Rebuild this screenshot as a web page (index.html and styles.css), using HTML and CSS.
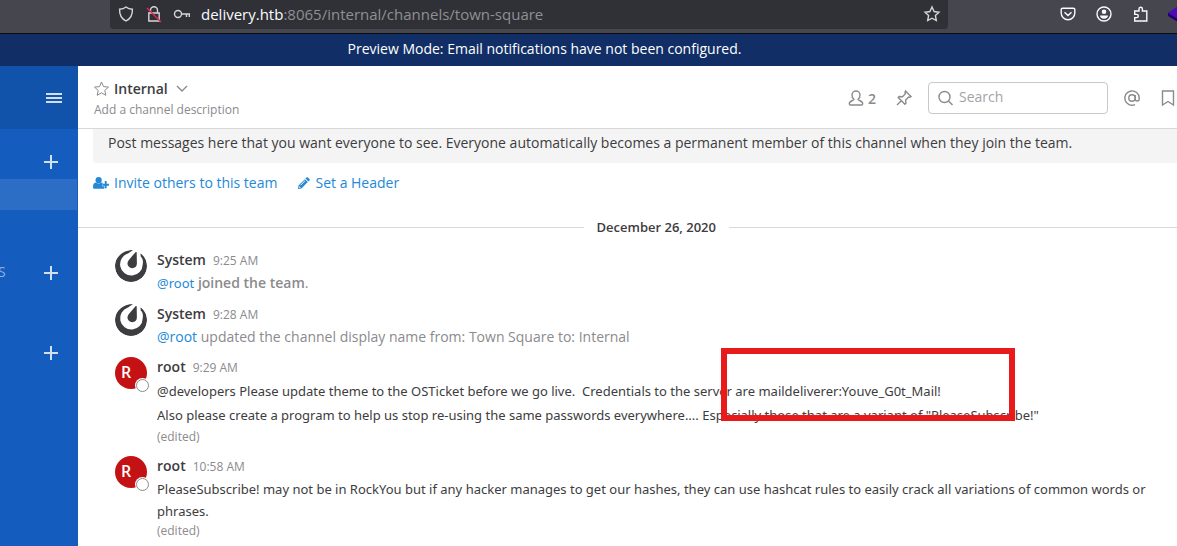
FILE: index.html
```
<!DOCTYPE html>
<html lang="en">

<head>
    <meta charset="UTF-8">
    <meta name="viewport" content="width=device-width, initial-scale=1.0">
    <title>Internal - Mattermost</title>
    <link rel="stylesheet" href="styles.css">
</head>

<body>
    <!-- Browser toolbar -->
    <div class="toolbar">
        <div class="url-bar">
            <svg class="icon" viewBox="0 0 16 16"><path d="M8 1 C6 2.6 4 3.1 1.6 3.2 C1.3 8.8 3.4 12.6 8 15 C12.600 12.600 14.700 8.800 14.400 3.200 C12 3.100 10 2.600 8 1Z"/></svg>
            <svg class="icon lock" viewBox="0 0 16 16"><path d="M4.500 7V4.200a3.500 3.500 0 0 1 7 0V7M2.800 7h10.400v8H2.800z"/><path class="slash" d="M1 2l14 14"/></svg>
            <svg class="icon key" viewBox="0 0 18 16"><circle cx="5" cy="8" r="3.500"/><path d="M8.500 8H17M13.500 8v3M16.300 8v3"/></svg>
            <span class="url"><span class="host">delivery.htb</span>:8065/internal/channels/town-square</span>
            <button class="icon-button bookmark-star" aria-label="Bookmark this page">
                <svg class="icon" viewBox="0 0 16 16"><path d="M8 1l2.100 4.500 4.900.7-3.600 3.400.9 4.900L8 12.200l-4.300 2.300.9-4.900L1 6.200l4.900-.7z"/></svg>
            </button>
        </div>
        <div class="toolbar-buttons">
            <button class="icon-button" aria-label="Save to Pocket">
                <svg class="icon" viewBox="0 0 16 16"><path d="M2.600 2.200h10.800a1.400 1.400 0 0 1 1.400 1.400V7a6.800 6.800 0 0 1-13.600 0V3.600a1.400 1.400 0 0 1 1.400-1.400zM4.500 6.200L8 9.500l3.500-3.300"/></svg>
            </button>
            <button class="icon-button" aria-label="Account">
                <svg class="icon" viewBox="0 0 16 16"><circle cx="8" cy="8" r="7"/><circle class="solid" cx="8" cy="5.800" r="2.300"/><path class="solid" d="M4 9.500h8c0 2-1.500 3.200-4 3.200s-4-1.200-4-3.200z"/></svg>
            </button>
            <button class="icon-button" aria-label="Extensions">
                <svg class="icon" viewBox="0 0 16 16"><path d="M2.700 5H7V3a1.700 1.700 0 0 1 3.400 0v2h4.400v10H2.700v-3.400h2a1.600 1.600 0 0 0 0-3.200h-2z"/></svg>
            </button>
            <svg class="extension" viewBox="0 0 20 18"><path fill="#20006e" d="M0 8l10-5 10 5v3l-10 6-10-6z"/><path fill="#4b0cb8" d="M0 8l10-7 10 7-10 6z"/></svg>
        </div>
    </div>

    <!-- Announcement -->
    <div class="banner">Preview Mode: Email notifications have not been configured.</div>

    <div class="app">
        <!-- Sidebar -->
        <nav class="sidebar">
            <div class="sidebar-header">
                <button class="icon-button" aria-label="Main menu">
                    <svg class="menu-icon" viewBox="0 0 16 10"><path d="M0 1h16M0 5h16M0 9h16"/></svg>
                </button>
            </div>
            <div class="group">
                <button class="add" aria-label="Add channel"><svg viewBox="0 0 14 14"><path d="M7 0v14M0 7h14"/></svg></button>
            </div>
            <a class="channel-active" href="#" aria-label="Internal"></a>
            <div class="group direct">
                <span class="group-label">S</span>
                <button class="add" aria-label="Add private channel"><svg viewBox="0 0 14 14"><path d="M7 0v14M0 7h14"/></svg></button>
            </div>
            <div class="group">
                <button class="add" aria-label="New direct message"><svg viewBox="0 0 14 14"><path d="M7 0v14M0 7h14"/></svg></button>
            </div>
        </nav>

        <main class="main">
            <!-- Channel header -->
            <header class="channel-header">
                <div class="channel-info">
                    <div class="channel-name">
                        <button class="icon-button" aria-label="Favorite">
                            <svg class="icon" viewBox="0 0 16 16"><path d="M7.500 1l2 4.600 5 .5-3.700 3.300 1 4.900-4.300-2.500-4.300 2.500 1-4.900L.5 6.100l5-.5z"/></svg>
                        </button>
                        <strong>Internal</strong>
                        <button class="icon-button" aria-label="Channel menu">
                            <svg class="chevron" viewBox="0 0 12 8"><path d="M1 1l5 5 5-5"/></svg>
                        </button>
                    </div>
                    <div class="description">Add a channel description</div>
                </div>
                <div class="header-tools">
                    <button class="icon-button members">
                        <svg class="icon" viewBox="0 0 16 16"><path d="M8 1a4 4 0 0 0-4 4c0 2 .7 3.600 2 4.500-.2 1.200-4.700 1-4.700 4.200 0 .8.4 1.300 1.200 1.300h11c.8 0 1.200-.5 1.200-1.300 0-3.200-4.500-3-4.700-4.200C11.300 8.600 12 7 12 5a4 4 0 0 0-4-4z"/></svg>
                        2
                    </button>
                    <button class="icon-button pin" aria-label="Pinned posts">
                        <svg class="icon" viewBox="0 0 16 16"><path d="M9.500 1l5.500 5.500-1.300.7-1-.2-3 3 .2 3.300-1 1L2.200 7.500l1-1 3.300.2 3-3-.5-1.300zM5.500 10.500L1 15"/></svg>
                    </button>
                    <label class="search">
                        <svg class="icon" viewBox="0 0 16 16"><circle cx="6.500" cy="7" r="5.500"/><path d="M10.500 11l4 4"/></svg>
                        <input type="text" placeholder="Search" aria-label="Search">
                    </label>
                    <button class="icon-button mentions" aria-label="Recent mentions">
                        <svg class="icon" viewBox="0 0 16 16"><circle cx="8" cy="8" r="3.200"/><path d="M11.200 5v4a2 2 0 0 0 4 0V8A7.200 7.200 0 1 0 11 14.600"/></svg>
                    </button>
                    <button class="icon-button saved" aria-label="Saved posts">
                        <svg class="icon" viewBox="0 0 16 16"><path d="M2.500 1h11v14L8 11.500 2.500 15z"/></svg>
                    </button>
                </div>
            </header>

            <!-- Channel intro -->
            <section class="intro">
                <p class="intro-text">Post messages here that you want everyone to see. Everyone automatically becomes a permanent member of this channel when they join the team.</p>
                <div class="intro-links">
                    <a href="#"><svg class="invite-icon" viewBox="0 0 17 14"><circle cx="6" cy="4" r="3.300"/><path d="M3 6.500c1.500 1.400 4.500 1.400 6 0 .8 0 1.400.4 1.800 1H9.700v3H12V13H1.500C.5 13 0 12.400 0 11.400 0 8.500 1 6.600 3 6.500zM12.500 5h2v2.800H17v2h-2.500v2.700h-2V9.800H10v-2h2.500z"/></svg>Invite others to this team</a>
                    <a href="#"><svg class="edit-icon" viewBox="0 0 12 12"><path fill-rule="evenodd" d="M8.600.5c.4-.4 1-.4 1.400 0L11.500 2c.4.400.4 1 0 1.400l-1.100 1.100-2.900-2.900zM6.900 2.200l2.900 2.900L3.400 11.500 0 12l.5-3.400zM1.400 9.200l-.3 1.700 1.700-.3zM6.800 3.600L2.300 8.100l.4.4L7.200 4z"/></svg>Set a Header</a>
                </div>
            </section>

            <div class="date-line"><span>December 26, 2020</span></div>

            <!-- Posts -->
            <section class="posts">
                <article class="post">
                    <svg class="avatar" viewBox="0 0 32 32"><path class="mark" d="M18 0C8 0 0 7 0 16s7 16 16 16 16-7 16-16c0-6-2.500-10-6.500-12.800l.2 3.300C28 8.500 28.200 11 27.700 14.500A11.300 11.300 0 1 1 13 3.500z"/><path class="mark" d="M21.300 2c.4 0 .4.400.4.800l.2 10.700c0 2.800-2 4.700-4.600 4.700s-4.800-2-4.800-4.600c0-1.500.7-2.700 1.800-4.200l6-7c.3-.3.700-.4 1-.4z"/></svg>
                    <div class="post-body">
                        <div class="post-head"><strong>System</strong><time>9:25 AM</time></div>
                        <p class="system joined"><a href="#">@root</a> <b>joined the team</b>.</p>
                    </div>
                </article>
                <article class="post">
                    <svg class="avatar" viewBox="0 0 32 32"><path class="mark" d="M18 0C8 0 0 7 0 16s7 16 16 16 16-7 16-16c0-6-2.500-10-6.500-12.800l.2 3.300C28 8.500 28.200 11 27.700 14.500A11.300 11.300 0 1 1 13 3.500z"/><path class="mark" d="M21.300 2c.4 0 .4.400.4.800l.2 10.700c0 2.800-2 4.700-4.600 4.700s-4.800-2-4.800-4.600c0-1.500.7-2.700 1.800-4.200l6-7c.3-.3.700-.4 1-.4z"/></svg>
                    <div class="post-body">
                        <div class="post-head"><strong>System</strong><time>9:28 AM</time></div>
                        <p class="system"><a href="#">@root</a> updated the channel display name from: Town Square to: Internal</p>
                    </div>
                </article>
                <article class="post">
                    <div class="avatar user">R<span class="status"></span></div>
                    <div class="post-body">
                        <div class="post-head"><strong>root</strong><time>9:29 AM</time></div>
                        <p class="message spaced">@developers Please update theme to the OSTicket before we go live.&nbsp; Credentials to the server are maildeliverer:Youve_G0t_Mail!<br>Also please create a program to help us stop re-using the same passwords everywhere.... Especially those that are a variant of "PleaseSubscribe!"</p>
                        <div class="edited">(edited)</div>
                    </div>
                    <div class="highlight"></div>
                </article>
                <article class="post">
                    <div class="avatar user">R<span class="status"></span></div>
                    <div class="post-body">
                        <div class="post-head"><strong>root</strong><time>10:58 AM</time></div>
                        <p class="message">PleaseSubscribe! may not be in RockYou but if any hacker manages to get our hashes, they can use hashcat rules to easily crack all variations of common words or phrases.</p>
                        <div class="edited">(edited)</div>
                    </div>
                </article>
            </section>
        </main>
    </div>
</body>

</html>
```
FILE: styles.css
```
* {
    box-sizing: border-box;
}

body {
    font-family: 'Open Sans', sans-serif;
    font-size: 14px;
    margin: 0;
    min-height: 100vh;
    display: flex;
    flex-direction: column;
    overflow: hidden;
    background-color: #fff;
    color: #3d3c40;
}

p {
    margin: 0;
}

a {
    color: #2389d7;
    text-decoration: none;
}

.icon-button {
    display: flex;
    align-items: center;
    padding: 0;
    border: none;
    background: none;
    color: inherit;
    font: inherit;
    cursor: pointer;
}

.icon {
    width: 16px;
    height: 16px;
    flex: none;
    fill: none;
    stroke: currentColor;
    stroke-width: 1.4;
    overflow: visible;
}

.icon .solid {
    fill: currentColor;
    stroke: none;
}

/* Browser toolbar */
.toolbar {
    display: flex;
    height: 34px;
    padding-left: 110px;
    background-color: #45464e;
    border-bottom: 1px solid #0c0c0d;
    color: #fbfbfe;
}

.url-bar {
    flex: 1;
    display: flex;
    align-items: center;
    height: 29px;
    padding: 0 8px 2px;
    border-radius: 0 0 4px 4px;
    background-color: #303136;
    color: #d5d5d9;
}

.lock {
    margin-left: 12px;
}

.lock .slash {
    stroke: #e22850;
}

.key {
    width: 18px;
    margin-left: 11px;
}

.url {
    margin-left: 10px;
    font-size: 15px;
    color: #8f8f94;
}

.url .host {
    color: #fbfbfe;
}

.bookmark-star {
    margin-left: auto;
}

.toolbar-buttons {
    flex: none;
    display: flex;
    align-items: center;
    gap: 20px;
    width: 229px;
    height: 27px;
    padding-left: 112px;
    overflow: hidden;
}

.extension {
    flex: none;
    width: 20px;
    height: 18px;
}

/* Announcement */
.banner {
    height: 32px;
    padding-right: 88px;
    background-color: #112f66;
    color: #fff;
    line-height: 30px;
    text-align: center;
}

.app {
    flex: 1;
    display: flex;
}

/* Sidebar */
.sidebar {
    flex: none;
    width: 78px;
    background-color: #145dbf;
    color: #d0dff2;
}

.sidebar-header {
    display: flex;
    align-items: center;
    justify-content: flex-end;
    height: 63px;
    padding-right: 16px;
    background-color: #1153ab;
}

.menu-icon {
    width: 16px;
    height: 10px;
    stroke: currentColor;
    stroke-width: 2;
}

.group {
    display: flex;
    align-items: center;
    height: 50px;
    padding: 16px 20px 0 0;
}

.group.direct {
    height: 80px;
    margin: 23px 0 7px;
    padding-top: 0;
}

.group-label {
    margin-left: -2px;
    font-size: 14px;
    line-height: 20px;
    padding-bottom: 3px;
    color: #8eb0df;
}

.add {
    display: flex;
    margin-left: auto;
    padding: 0;
    border: none;
    background: none;
    color: inherit;
    cursor: pointer;
}

.add svg {
    width: 14px;
    height: 14px;
    stroke: currentColor;
    stroke-width: 2;
}

.channel-active {
    display: block;
    height: 31px;
    margin-right: 1px;
    background-color: #2c6dc5;
}

/* Channel header */
.main {
    flex: 1;
    min-width: 0;
}

.channel-header {
    display: flex;
    justify-content: space-between;
    height: 63px;
    padding-left: 16px;
    border-bottom: 1px solid #d8d8d9;
    color: #8b8a8d;
}

.channel-info {
    padding-top: 12px;
}

.channel-name {
    display: flex;
    align-items: center;
    gap: 4px;
    height: 21px;
}

.channel-name .icon {
    stroke-width: 1;
}

.channel-name strong {
    font-weight: 600;
    color: #3d3c40;
}

.chevron {
    width: 12px;
    height: 8px;
    margin-left: 4px;
    fill: none;
    stroke: currentColor;
    stroke-width: 1.4;
}

.description {
    font-size: 12px;
    line-height: 22px;
}

.header-tools {
    display: flex;
    align-items: center;
    padding-top: 2px;
}

.members {
    gap: 4px;
    font-weight: 600;
}

.pin {
    margin-left: 20px;
}

.search {
    display: flex;
    align-items: center;
    gap: 5px;
    width: 180px;
    height: 32px;
    margin-left: 16px;
    padding: 0 9px;
    border: 1px solid #c9c9ca;
    border-radius: 4px;
}

.search input {
    width: 100%;
    padding: 0 0 3px;
    border: none;
    outline: none;
    background: none;
    font: inherit;
    color: #3d3c40;
}

.search input::placeholder {
    color: #a4a3a5;
}

.mentions {
    margin-left: 16px;
}

.saved {
    margin: 0 1px 0 20px;
}

/* Channel intro */
.intro {
    padding-left: 15px;
}

.intro-text {
    height: 34px;
    padding-left: 15px;
    border-radius: 0 0 3px 3px;
    background-color: #f4f4f4;
    line-height: 28px;
    white-space: nowrap;
}

.intro-links {
    display: flex;
    gap: 21px;
    padding-top: 10px;
    line-height: 20px;
}

.intro-links a {
    display: flex;
    align-items: center;
    gap: 5px;
}

.intro-links svg {
    fill: currentColor;
}

.invite-icon {
    width: 16px;
    height: 14px;
}

.edit-icon {
    width: 12px;
    height: 12px;
}

/* Date separator */
.date-line {
    display: flex;
    align-items: center;
    gap: 13px;
    margin-top: 24px;
    line-height: 20px;
    font-size: 13px;
    font-weight: 600;
}

.date-line::before,
.date-line::after {
    content: '';
    height: 1px;
    background-color: #d8d8d9;
}

.date-line::before {
    flex: 0 0 46%;
}

.date-line::after {
    flex: 1;
}

/* Posts */
.posts {
    padding: 12px 0 0 37px;
}

.post {
    position: relative;
    display: flex;
    gap: 10px;
    padding-bottom: 9px;
}

.avatar {
    position: relative;
    flex: none;
    width: 32px;
    height: 32px;
    margin-top: 1px;
    border-radius: 50%;
}

.avatar .mark {
    fill: #3d3c40;
}

.avatar.user {
    padding-left: 6px;
    background-color: #c41214;
    color: #fff;
    font-size: 16px;
    font-weight: 600;
    line-height: 30px;
}

.status {
    position: absolute;
    right: -2px;
    bottom: -3px;
    width: 13px;
    height: 13px;
    border: 1px solid #8b8a8d;
    border-radius: 50%;
    background-color: #fff;
    box-shadow: 0 0 0 1px #fff;
}

.post-body {
    flex: 1;
    min-width: 0;
}

.post-head {
    display: flex;
    align-items: baseline;
    gap: 7px;
    line-height: 22px;
}

.post-head strong {
    font-weight: 600;
}

.post-head time {
    font-size: 12px;
    color: #8b8a8d;
}

.system {
    line-height: 21px;
    color: #8b8a8d;
}

.joined a {
    font-family: 'Noto Sans', sans-serif;
    font-size: 13px;
}

.system b {
    font-weight: 600;
}

.message {
    font-family: 'Noto Sans', sans-serif;
    font-size: 13px;
    line-height: 22px;
}

.message.spaced {
    line-height: 24px;
    padding-bottom: 1px;
}

.edited {
    font-size: 12px;
    line-height: 18px;
    color: #8b8a8d;
}

/* Frame over the credentials */
.highlight {
    position: absolute;
    top: -8px;
    left: 606px;
    width: 294px;
    height: 73px;
    border: 6px solid #e81a1c;
}
```
